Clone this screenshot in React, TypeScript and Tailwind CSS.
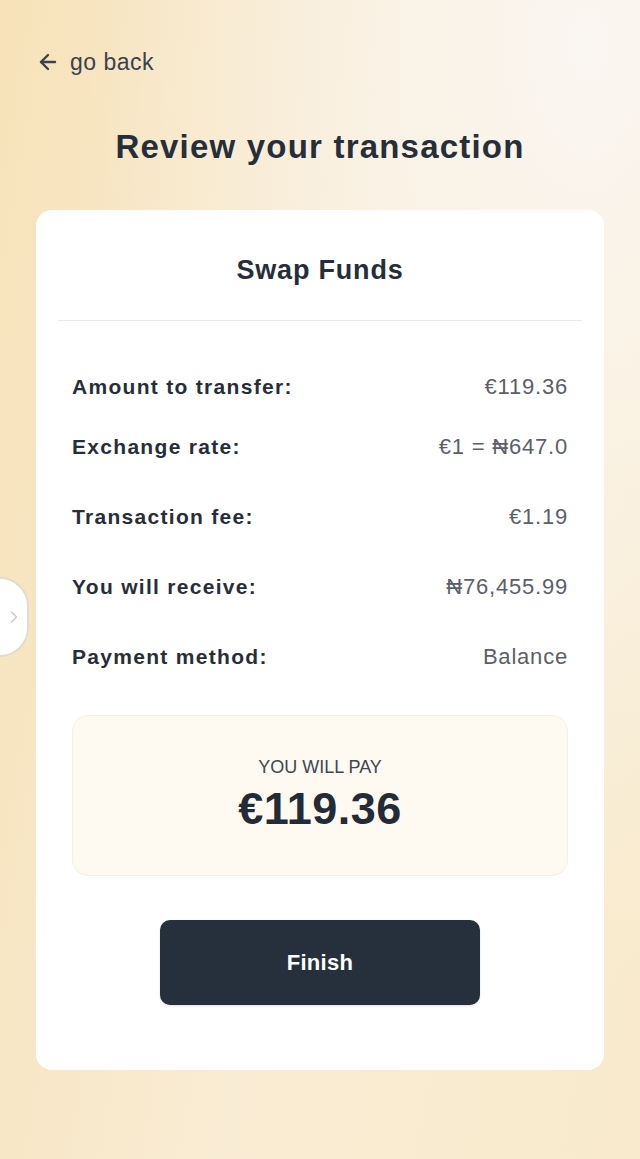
import { ArrowLeft, ChevronRight } from 'lucide-react';

type Row = {
  label: string;
  value: string;
  gap: string;
};

const rows: Row[] = [
  { label: 'Amount to transfer:', value: '€119.36', gap: 'mt-0' },
  { label: 'Exchange rate:', value: '€1 = ₦647.0', gap: 'mt-[32px]' },
  { label: 'Transaction fee:', value: '€1.19', gap: 'mt-[42px]' },
  { label: 'You will receive:', value: '₦76,455.99', gap: 'mt-[42px]' },
  { label: 'Payment method:', value: 'Balance', gap: 'mt-[42px]' },
];

export default function App() {
  return (
    <div className="relative min-h-[1159px] w-full overflow-hidden bg-[radial-gradient(ellipse_at_92%_4%,#faf6f1_0%,rgba(250,245,238,0)_60%),linear-gradient(100deg,#f7e2b9_0%,#f9ecd4_50%,#f8eacb_100%)] font-['Liberation_Sans',Arial,sans-serif] text-[#262e3a]">
      <div className="flex flex-col px-9 pt-[50px]">
        <button className="flex items-center gap-[10px] self-start text-[23px] leading-6 tracking-[0.5px] text-[#3a4150]">
          <ArrowLeft className="h-6 w-6" strokeWidth={2.4} />
          <span>go back</span>
        </button>

        <h1 className="mt-[54px] text-center text-[33px] font-bold leading-[38px] tracking-[1.2px]">
          Review your transaction
        </h1>

        <div className="mt-[44px] flex flex-col rounded-2xl bg-white pb-[65px]">
          <div className="mx-[22px] border-b border-[#e9e9e9] pb-[34px] pt-[44px] text-center text-[27px] font-bold leading-8 tracking-[0.8px]">
            Swap Funds
          </div>

          <ul className="flex flex-col px-9 pt-[52px]">
            {rows.map((row) => (
              <li key={row.label} className={`flex items-center justify-between leading-7 ${row.gap}`}>
                <span className="text-[21px] font-bold tracking-[1.3px] text-[#272e39]">{row.label}</span>
                <span className="text-[22px] tracking-[0.8px] text-[#5a5f68]">{row.value}</span>
              </li>
            ))}
          </ul>

          <div className="mx-9 mt-[44px] flex h-[161px] flex-col items-center rounded-2xl border border-[#f6efe2] bg-[#fefaf2] pt-[40px]">
            <span className="text-[18px] leading-[22px] text-[#41464f]">YOU WILL PAY</span>
            <span className="mt-[6px] text-[45px] font-bold leading-[50px] tracking-[0.5px] text-[#232b37]">€119.36</span>
          </div>

          <button className="mt-[44px] h-[85px] w-[320px] self-center rounded-[10px] bg-[#262f3c] text-[22px] font-bold tracking-[0.3px] text-white shadow-sm">
            Finish
          </button>
        </div>
      </div>

      <div className="absolute left-0 top-[577px] flex h-[80px] w-[29px] items-center justify-center rounded-r-full border-2 border-l-0 border-[#e2dccf] bg-white">
        <ChevronRight className="h-5 w-5 text-[#c6c6c6]" strokeWidth={1.5} />
      </div>
    </div>
  );
}
